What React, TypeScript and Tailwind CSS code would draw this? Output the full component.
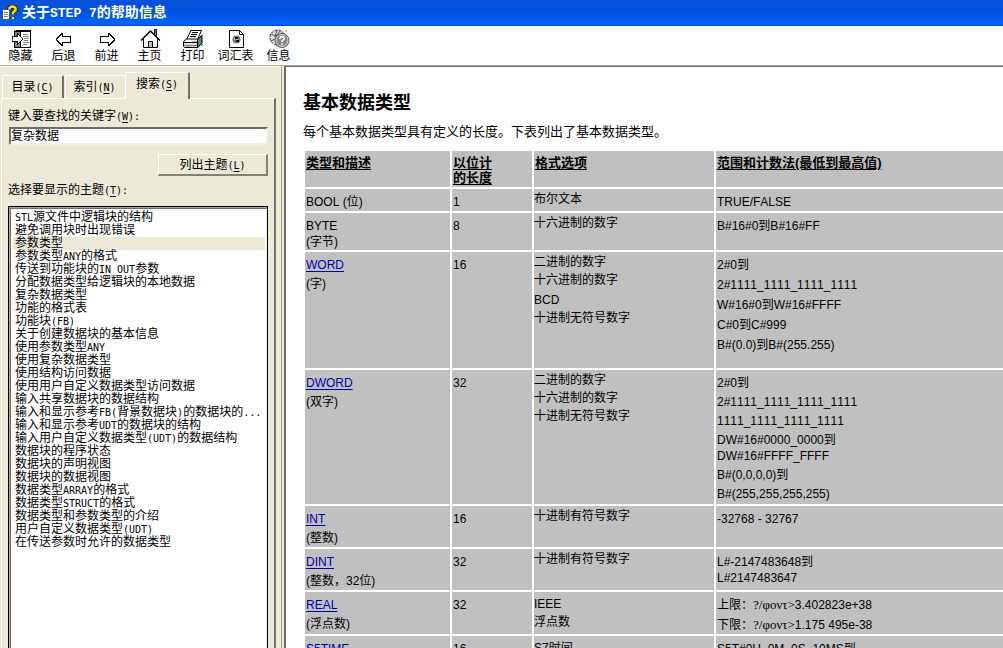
import { ReactNode, useState } from 'react'

interface DataRow {
    height: string
    name: string
    link?: boolean
    note?: string
    noteInline?: boolean
    bits: string
    formats: string[]
    ranges: ReactNode[]
}

const topics = [
    'STL源文件中逻辑块的结构',
    '避免调用块时出现错误',
    '参数类型',
    '参数类型ANY的格式',
    '传送到功能块的IN_OUT参数',
    '分配数据类型给逻辑块的本地数据',
    '复杂数据类型',
    '功能的格式表',
    '功能块(FB)',
    '关于创建数据块的基本信息',
    '使用参数类型ANY',
    '使用复杂数据类型',
    '使用结构访问数据',
    '使用用户自定义数据类型访问数据',
    '输入共享数据块的数据结构',
    '输入和显示参考FB(背景数据块)的数据块的...',
    '输入和显示参考UDT的数据块的结构',
    '输入用户自定义数据类型(UDT)的数据结构',
    '数据块的程序状态',
    '数据块的声明视图',
    '数据块的数据视图',
    '数据类型ARRAY的格式',
    '数据类型STRUCT的格式',
    '数据类型和参数类型的介绍',
    '用户自定义数据类型(UDT)',
    '在传送参数时允许的数据类型',
]

function SymbolText() {
    return <span className="font-['Liberation_Serif','DejaVu_Serif',serif] text-[13px]">?/φοντ&gt;</span>
}

const rows: DataRow[] = [
    { height: 'h-[22px]', name: 'BOOL (位)', bits: '1', formats: ['布尔文本'], ranges: ['TRUE/FALSE'] },
    { height: 'h-[37px]', name: 'BYTE', note: '(字节)', noteInline: true, bits: '8', formats: ['十六进制的数字'], ranges: ['B#16#0到B#16#FF'] },
    {
        height: 'h-[116px]', name: 'WORD', link: true, note: '(字)', bits: '16',
        formats: ['二进制的数字', '十六进制的数字', 'BCD', '十进制无符号数字'],
        ranges: ['2#0到', '2#1111_1111_1111_1111', 'W#16#0到W#16#FFFF', 'C#0到C#999', 'B#(0.0)到B#(255.255)'],
    },
    {
        height: 'h-[134px]', name: 'DWORD', link: true, note: '(双字)', bits: '32',
        formats: ['二进制的数字', '十六进制的数字', '十进制无符号数字'],
        ranges: ['2#0到', '2#1111_1111_1111_1111', '1111_1111_1111_1111', <>DW#16#0000_0000到<br />DW#16#FFFF_FFFF</>, 'B#(0,0,0,0)到', 'B#(255,255,255,255)'],
    },
    { height: 'h-[41px]', name: 'INT', link: true, note: '(整数)', bits: '16', formats: ['十进制有符号数字'], ranges: ['-32768 - 32767'] },
    { height: 'h-[41px]', name: 'DINT', link: true, note: '(整数，32位)', bits: '32', formats: ['十进制有符号数字'], ranges: [<>L#-2147483648到<br />L#2147483647</>] },
    {
        height: 'h-[42px]', name: 'REAL', link: true, note: '(浮点数)', bits: '32', formats: ['IEEE', '浮点数'],
        ranges: [<>上限：<SymbolText />3.402823e+38</>, <>下限：<SymbolText />1.175 495e-38</>],
    },
    { height: 'h-[42px]', name: 'S5TIME', link: true, bits: '16', formats: ['S7时间'], ranges: ['S5T#0H_0M_0S_10MS到'] },
]

// Latin runs are set half as wide as the Chinese glyphs
function Mixed({ text }: { text: string }) {
    return (
        <>
            {text.split(/([\x20-\x7e]+)/).map((part, i) =>
                i % 2 === 1 ? <span key={i} className="font-['DejaVu_Sans_Mono',monospace] text-[10px]">{part}</span> : part
            )}
        </>
    )
}

function AccessKey({ char, colon }: { char: string; colon?: boolean }) {
    return (
        <span className="font-['DejaVu_Sans_Mono',monospace] text-[10px]">
            (<span className="underline underline-offset-2">{char}</span>){colon && ':'}
        </span>
    )
}

function HelpIcon() {
    return (
        <svg className="w-4 h-4" viewBox="0 0 16 16">
            <path d="M0.500 4.500h7v10h-7z" fill="#fff" stroke="#555" />
            <path d="M2 7.500h4M2 9.500h4M2 11.500h4" stroke="#888" />
            <path d="M7.500 4.500V3l1.500-1.200h3L13.500 3v2.500L11 7.500V9.500M11 12v2" fill="none" stroke="#222" strokeWidth="4.500" />
            <path d="M7.500 4.500V3l1.500-1.200h3L13.500 3v2.500L11 7.500V9.500M11 12v2" fill="none" stroke="#ffe600" strokeWidth="2.500" />
        </svg>
    )
}

function HideIcon() {
    return (
        <svg className="w-6 h-5" viewBox="0 0 24 20" shapeRendering="crispEdges">
            <path d="M5 1h17v18H5z" fill="#000" />
            <path d="M6 3h5v15H6z" fill="#808080" />
            <path d="M12 3h9v15h-9z" fill="#fff" />
            <path d="M5 1h2v1H5z" fill="#d90" />
            <path d="M14 5h5v1h-5zM14 7h6v1h-6zM15 9h5v1h-5zM15 11h4v1h-4zM14 13h6v1h-6zM14 15h4v1h-4z" fill="#808080" />
            <path d="M3 7h5V4h1v1h1v1h1v1h1v1h1v1h1v2h-1v1h-1v1h-1v1h-1v1H9v1H8v-3H3z" fill="#000" />
            <path d="M4 8h5V6h1v1h1v1h1v1h1v2h-1v1h-1v1h-1v1H9v-2H4z" fill="#fff" />
            <path d="M3 7h1v2H3z" fill="#d00" />
            <path d="M3 10h1v2H3z" fill="#0a0" />
        </svg>
    )
}

function BackIcon() {
    return (
        <svg className="w-6 h-5" viewBox="0 0 24 20" shapeRendering="crispEdges">
            <path d="M4 9h1V8h1V7h1V6h1V5h1V4h2v3h8v7h-8v3H9v-1H8v-1H7v-1H6v-1H5v-1H4z" fill="#000" />
            <path d="M5 10h1V9h1V8h1V7h1V6h1v2h8v5h-8v2H9v-1H8v-1H7v-1H6v-1H5z" fill="#fff" />
            <path d="M4 9h1v1H4z" fill="#d00" />
            <path d="M4 11h1v1H4z" fill="#0a0" />
        </svg>
    )
}

function ForwardIcon() {
    return (
        <svg className="w-6 h-5" viewBox="0 0 24 20" shapeRendering="crispEdges">
            <path d="M20 9h-1V8h-1V7h-1V6h-1V5h-1V4h-2v3H5v7h8v3h2v-1h1v-1h1v-1h1v-1h1v-1h1z" fill="#000" />
            <path d="M19 10h-1V9h-1V8h-1V7h-1V6h-1v2H6v5h8v2h1v-1h1v-1h1v-1h1v-1h1z" fill="#fff" />
        </svg>
    )
}

function HomeIcon() {
    return (
        <svg className="w-6 h-5" viewBox="0 0 24 20">
            <path d="M16.500 5V0.500h2V8" fill="#808080" stroke="#000" />
            <path d="M5.500 9.500v9h14v-9l-7-7z" fill="#fff" />
            <path d="M5.500 9.500v9h14v-9" fill="none" stroke="#000" />
            <path d="M3 11.500l9.500-9.500 9.500 9.500" fill="none" stroke="#000" strokeWidth="1.500" />
            <path d="M10.500 18.500v-6h4v6z" fill="#c0c0c0" stroke="#000" />
        </svg>
    )
}

function PrintIcon() {
    return (
        <svg className="w-6 h-5" viewBox="0 0 24 20">
            <path d="M10 1.500h10.500l-4 9h-11z" fill="#fff" stroke="#000" />
            <path d="M11 3.500h6M10 5.500h6M9 7.500h6" stroke="#000" />
            <path d="M16 11.500l5-5.500v8l-4 4.500z" fill="#777" stroke="#000" />
            <path d="M2.500 12.500l3-2.500h11v3l-14 1z" fill="#fff" stroke="#000" />
            <path d="M2.500 13.500h14v5h-13l-1-1z" fill="#ddd" stroke="#000" />
            <path d="M3 16.500h13" stroke="#777" />
            <path d="M20 15h2v2h-2zM6 17h2v1H6z" fill="#00d8e8" />
        </svg>
    )
}

function GlossaryIcon() {
    return (
        <svg className="w-6 h-5" viewBox="0 0 24 20">
            <path d="M5.500 1.500h10l4 4v13h-14z" fill="#fff" stroke="#000" />
            <path d="M15.500 1.500v4h4" fill="none" stroke="#000" />
            <circle cx="12.500" cy="10.500" r="4" fill="#777" />
            <path d="M11 8h3v2h-3zM12 11h3v2h-3z" fill="#111" />
            <path d="M10 9h1v2h-1zM12 10h2v1h-2z" fill="#ccc" />
        </svg>
    )
}

function InfoIcon() {
    return (
        <svg className="w-6 h-5" viewBox="0 0 24 20">
            <circle cx="10.500" cy="8.500" r="7.500" fill="#ddd" stroke="#333" strokeDasharray="3 1" />
            <path d="M4 5l5 2 5-6M4 12l4-2M10 1l-2 7" fill="none" stroke="#555" />
            <path d="M18 1h2v2h-2z" fill="#fd0" />
            <circle cx="15" cy="11.500" r="7" fill="#777" stroke="#555" />
            <circle cx="15" cy="11.500" r="6" fill="#888" stroke="#ddd" />
            <path d="M13 10V9l1-1.200h2L17.200 9v1.200L15 12v1.200M15 14.500v1.500" fill="none" stroke="#fff" strokeWidth="1.500" />
        </svg>
    )
}

const tools = [
    { label: '隐藏', icon: <HideIcon /> },
    { label: '后退', icon: <BackIcon /> },
    { label: '前进', icon: <ForwardIcon /> },
    { label: '主页', icon: <HomeIcon /> },
    { label: '打印', icon: <PrintIcon /> },
    { label: '词汇表', icon: <GlossaryIcon /> },
    { label: '信息', icon: <InfoIcon /> },
]

function Sidebar() {
    const [keyword, setKeyword] = useState('复杂数据')
    const [selected, setSelected] = useState(2)

    return (
        <aside className="w-[281px] shrink-0 flex flex-col pt-[5px] pl-px pr-[5px] border-t border-white bg-[#ece9d8]">
            {/* Tabs */}
            <div className="flex items-end pl-px h-[26px] shrink-0">
                <button className="w-[62px] h-[23px] border-t border-l border-white border-r-2 border-r-[#716f64] rounded-t-xs whitespace-nowrap">
                    目录<AccessKey char="C" />
                </button>
                <button className="w-[60px] h-[23px] ml-px pr-[2px] border-t border-l border-white rounded-t-xs whitespace-nowrap">
                    索引<AccessKey char="N" />
                </button>
                <button className="relative z-10 w-[65px] h-[27px] -mb-px pb-1 bg-[#ece9d8] border-t border-l border-white border-r-2 border-r-[#716f64] rounded-t-xs whitespace-nowrap">
                    搜索<AccessKey char="S" />
                </button>
            </div>

            {/* Search pane */}
            <div className="flex-1 min-h-0 flex flex-col pt-[9px] pl-[6px] pr-[6px] border-t border-l border-white border-r-2 border-r-[#716f64]">
                <label htmlFor="keyword" className="leading-4">键入要查找的关键字<AccessKey char="W" colon /></label>
                <input
                    id="keyword"
                    value={keyword}
                    onChange={(e) => setKeyword(e.target.value)}
                    className="mt-[2px] ml-px h-[18px] shrink-0 bg-white border-2 border-t-[#716f64] border-l-[#716f64] border-r-[#f1efe2] border-b-[#f1efe2] outline-none"
                />
                <button className="self-end mt-[9px] w-[110px] h-[22px] shrink-0 border border-white border-r-2 border-b-2 border-r-[#85826f] border-b-[#85826f]">
                    列出主题<AccessKey char="L" />
                </button>
                <div id="topics" className="mt-[6px] mb-[7px] leading-4">选择要显示的主题<AccessKey char="T" colon /></div>
                <ul
                    aria-labelledby="topics"
                    className="flex-1 min-h-0 overflow-hidden pt-[4px] pl-[4px] pr-[2px] bg-white border border-b-0 border-black shadow-[inset_1px_1px_0_#aca899,inset_2px_2px_0_#716f64,inset_-1px_0_0_#ece9d8]"
                >
                    {topics.map((topic, i) => (
                        <li key={topic}>
                            <button
                                onClick={() => setSelected(i)}
                                className={`block w-full h-[13px] pl-[2px] text-left leading-[13px] whitespace-nowrap ${i === selected ? 'bg-[#ece9d8]' : ''}`}
                            >
                                <Mixed text={topic} />
                            </button>
                        </li>
                    ))}
                </ul>
            </div>
        </aside>
    )
}

function TypeTable() {
    return (
        <table className="w-[calc(100%+2px)] table-fixed border-separate border-spacing-[2px] [font-kerning:none]">
            <thead>
                <tr className="h-[36px] text-left align-top text-[13px] leading-[15px] underline underline-offset-2">
                    <th className="w-[145px] pt-1 pl-px bg-[#c0c0c0]">类型和描述</th>
                    <th className="w-[80px] pt-1 pl-px bg-[#c0c0c0]">以位计<br />的长度</th>
                    <th className="w-[180px] pt-1 pl-px bg-[#c0c0c0]">格式选项</th>
                    <th className="pt-1 pl-px bg-[#c0c0c0]">范围和计数法(最低到最高值)</th>
                </tr>
            </thead>
            <tbody>
                {rows.map(row => (
                    <tr key={row.name} className={`${row.height} align-top leading-4`}>
                        <td className="pt-[5px] pl-px bg-[#c0c0c0]">
                            {row.link ? <a href="#" className="text-[#0000a8] underline underline-offset-2">{row.name}</a> : row.name}
                            {row.note && <p className={row.noteInline ? '' : 'mt-[3px]'}>{row.note}</p>}
                        </td>
                        <td className="pt-[5px] pl-px bg-[#c0c0c0]">{row.bits}</td>
                        <td className="pt-[3px] bg-[#c0c0c0]">
                            <div className="flex flex-col gap-[3px] leading-[15px]">
                                {row.formats.map(format => (
                                    <p key={format} className={/^[A-Z]/.test(format) ? 'pt-[2px]' : ''}>{format}</p>
                                ))}
                            </div>
                        </td>
                        <td className="pt-[5px] pl-px bg-[#c0c0c0]">
                            <div className={`flex flex-col ${row.ranges.length > 5 ? 'gap-[3px]' : 'gap-1'}`}>
                                {row.ranges.map((range, i) => <p key={i}>{range}</p>)}
                            </div>
                        </td>
                    </tr>
                ))}
            </tbody>
        </table>
    )
}

export default function App() {
    return (
        <div className="h-screen flex flex-col overflow-hidden bg-white text-black text-[12px] font-['Liberation_Sans','Noto_Sans_CJK_SC',sans-serif]">
            {/* Title bar */}
            <header className="h-[26px] shrink-0 flex items-center gap-1 pl-[2px] bg-linear-to-b from-[#0a4fd8] via-[#0054e3] to-[#0066ff] border-b border-[#0043c8] text-white">
                <HelpIcon />
                <h1 className="font-bold text-[14px] leading-5 whitespace-pre">
                    关于<span className="font-['Liberation_Mono',monospace] text-[13px]">STEP 7</span>的帮助信息
                </h1>
            </header>

            {/* Toolbar */}
            <nav className="h-[40px] shrink-0 flex pt-[3px] border-b border-[#aca899] bg-white">
                {tools.map(tool => (
                    <button key={tool.label} className="w-[43px] pr-[2px] flex flex-col items-center whitespace-nowrap leading-[14px]">
                        {tool.icon}
                        {tool.label}
                    </button>
                ))}
            </nav>

            <div className="flex-1 min-h-0 flex">
                <Sidebar />
                <div className="w-[3px] shrink-0 border-l border-[#aca899] bg-[#ece9d8]" />
                <main className="flex-1 min-w-0 overflow-hidden pl-[17px] pt-[24px] border-t border-l-2 border-[#716f64]">
                    <h2 className="text-[18px] leading-6 font-bold">基本数据类型</h2>
                    <p className="mt-[7px] mb-[7px] text-[13px] leading-5">每个基本数据类型具有定义的长度。下表列出了基本数据类型。</p>
                    <TypeTable />
                </main>
            </div>
        </div>
    )
}
